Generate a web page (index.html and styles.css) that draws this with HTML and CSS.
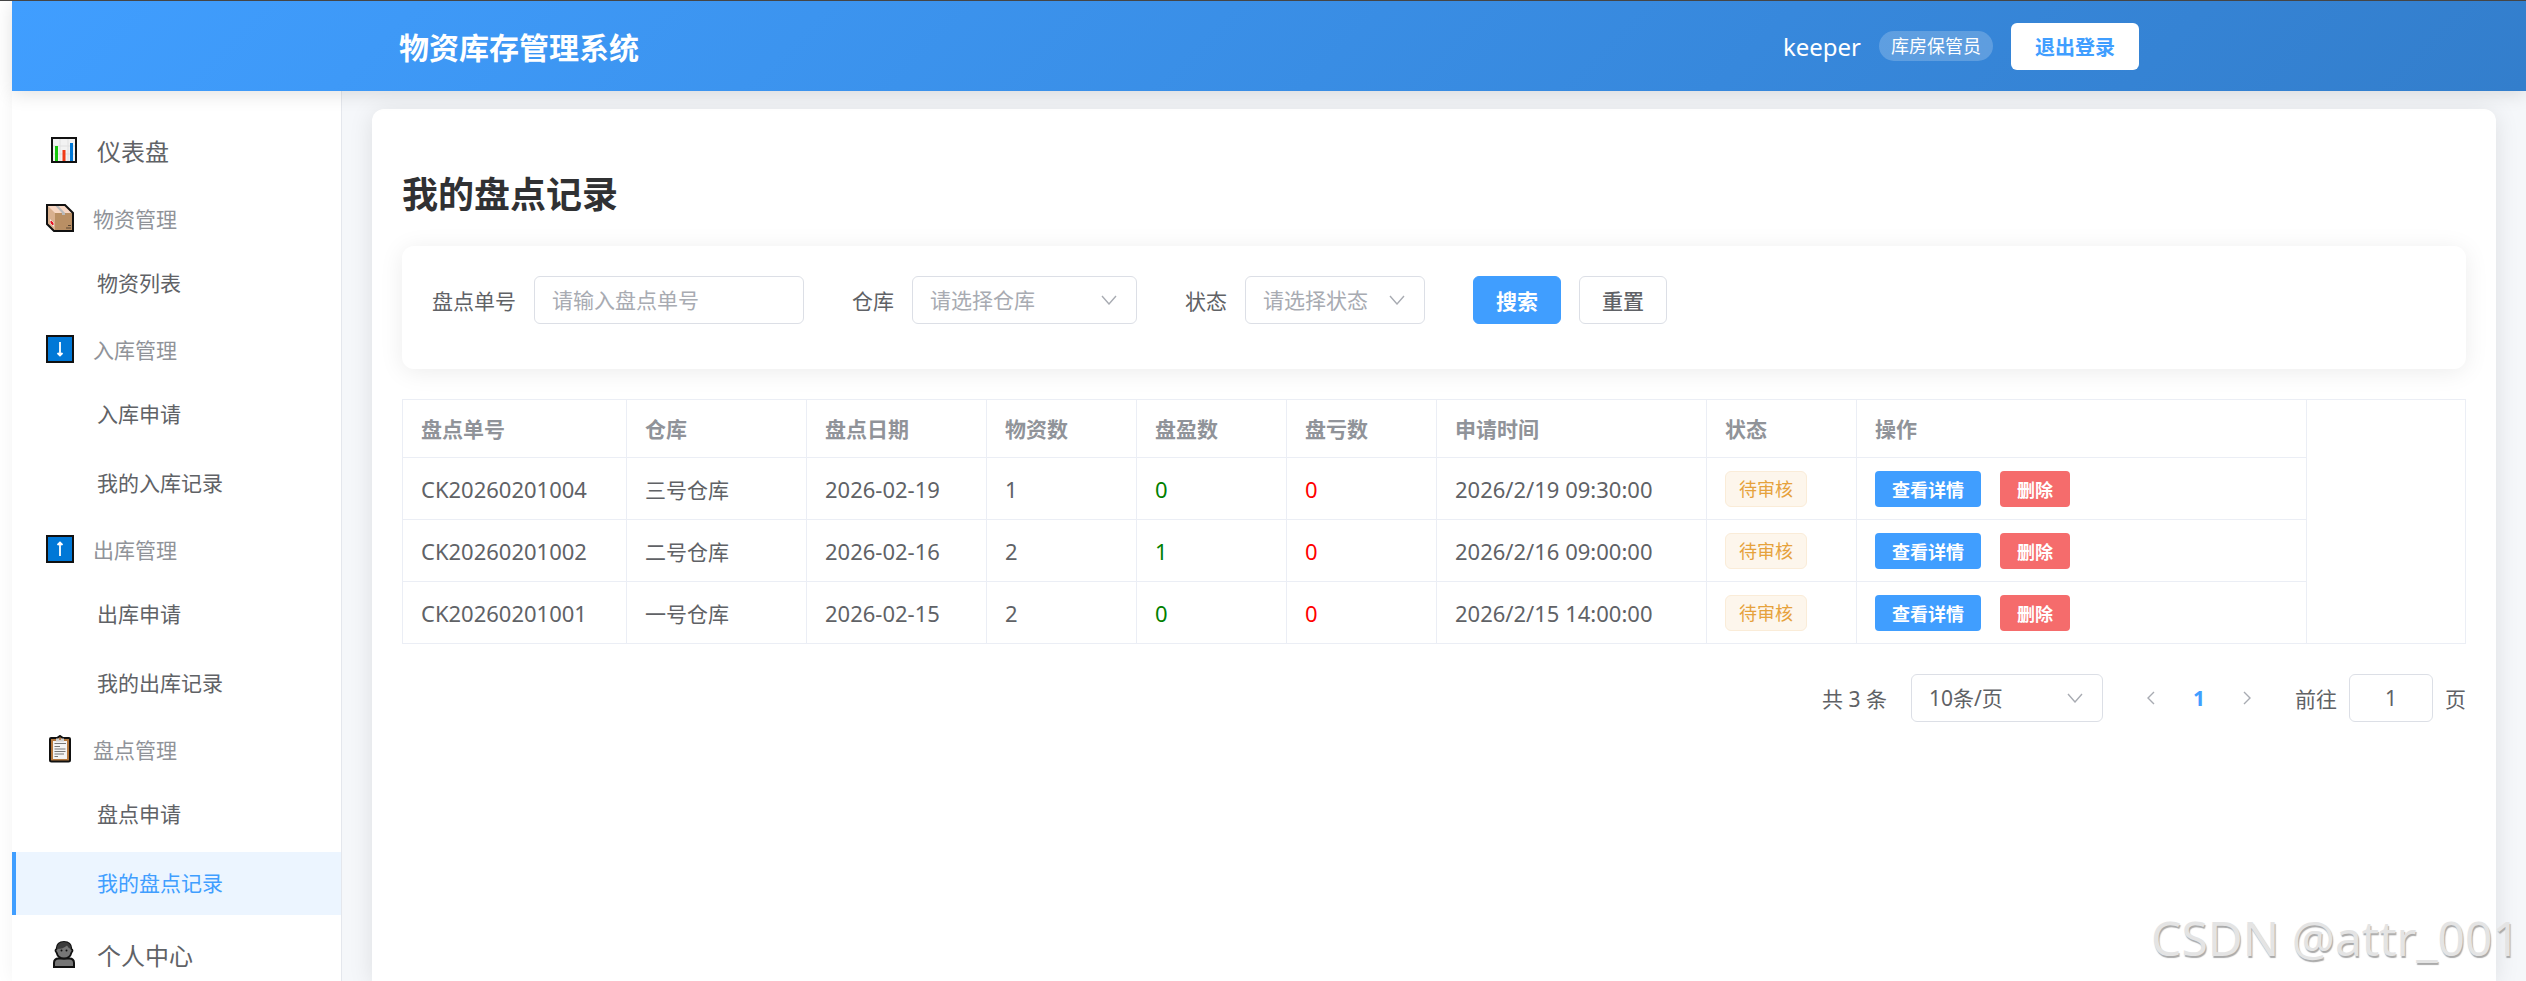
FILE: index.html
```html
<!DOCTYPE html>
<html lang="zh-CN">
<head>
  <meta charset="UTF-8">
  <meta name="viewport" content="width=device-width, initial-scale=1.0">
  <title>物资库存管理系统</title>
  <link rel="stylesheet" href="styles.css">
</head>
<body>
  <header class="header">
    <div class="header-content">
      <div class="logo">物资库存管理系统</div>
      <div class="user-info">
        <span class="username">keeper</span>
        <span class="role">库房保管员</span>
        <button type="button" class="logout-btn">退出登录</button>
      </div>
    </div>
  </header>

  <div class="layout">
    <nav class="sidebar">
      <a href="#" class="menu-item">
        <svg class="icon" viewBox="0 0 28 28">
          <rect x="2" y="2" width="24" height="24" fill="#f2f2f2" stroke="#111" stroke-width="2"/>
          <path d="M3 10H25M3 18H25M10 3V25M18 3V25" stroke="#e0e0e0"/>
          <path d="M6.500 10V25" stroke="#16c60c" stroke-width="3"/>
          <path d="M14 14V25" stroke="#f03a17" stroke-width="3"/>
          <path d="M21.500 7V25" stroke="#0078d7" stroke-width="3"/>
        </svg>
        <span>仪表盘</span>
      </a>

      <div class="menu-title">
        <svg class="icon" viewBox="0 0 28 28">
          <path d="M1 1H19L27 9V27H8L1 20Z" fill="#d9b08f"/>
          <path d="M1 1H19L27 9H9Z" fill="#f7d7c4"/>
          <path d="M9 9H27V27H9Z" fill="#b98f64"/>
          <path d="M9 1.500H12L19 9V11H16V9Z" fill="#b9b9b9"/>
          <path d="M4 15L8 19V23L4 19Z" fill="#f4e4e4"/>
          <path d="M5 17L7 19V21L5 19Z" fill="#e81224" stroke="#e81224"/>
          <path d="M22 21.500H25M20 24H25" stroke="#5a4632" stroke-width="1"/>
          <path d="M1 1H19L27 9V27H8L1 20Z" fill="none" stroke="#111" stroke-width="2"/>
        </svg>
        <span>物资管理</span>
      </div>
      <div class="submenu">
        <a href="#" class="submenu-item">物资列表</a>
      </div>

      <div class="menu-title">
        <svg class="icon" viewBox="0 0 28 28">
          <rect x="1" y="1" width="26" height="26" fill="#0078d7" stroke="#111" stroke-width="2"/>
          <path d="M14 7V20M11.500 18L14 20.500L16.500 18" fill="none" stroke="#fff" stroke-width="1.800"/>
        </svg>
        <span>入库管理</span>
      </div>
      <div class="submenu">
        <a href="#" class="submenu-item">入库申请</a>
        <a href="#" class="submenu-item">我的入库记录</a>
      </div>

      <div class="menu-title">
        <svg class="icon" viewBox="0 0 28 28">
          <rect x="1" y="1" width="26" height="26" fill="#0078d7" stroke="#111" stroke-width="2"/>
          <path d="M14 21V8M11.500 10L14 7.500L16.500 10" fill="none" stroke="#fff" stroke-width="1.800"/>
        </svg>
        <span>出库管理</span>
      </div>
      <div class="submenu">
        <a href="#" class="submenu-item">出库申请</a>
        <a href="#" class="submenu-item">我的出库记录</a>
      </div>

      <div class="menu-title">
        <svg class="icon" viewBox="0 0 28 28">
          <path d="M5 3H11L14 1L17 3H23Q24 3 24 4V25Q24 26.500 22.500 26.500H5.500Q4 26.500 4 25V4Q4 3 5 3Z" fill="#b5793f" stroke="#111" stroke-width="2"/>
          <path d="M7 6H21V24H7Z" fill="#f4f4f4"/>
          <path d="M10 3.500H18V6.500H10Z" fill="#d0d0d0"/>
          <circle cx="14" cy="4" r="1" fill="#a96b32"/>
          <path d="M8.500 8.500H20M8.500 11.500H14M8.500 14H19.500M8.500 16.500H19.500M8.500 19H18M8.500 21.500H12" stroke="#777" stroke-width="1.200"/>
        </svg>
        <span>盘点管理</span>
      </div>
      <div class="submenu">
        <a href="#" class="submenu-item">盘点申请</a>
        <a href="#" class="submenu-item active">我的盘点记录</a>
      </div>

      <a href="#" class="menu-item">
        <svg class="icon" viewBox="0 0 28 28">
          <path d="M4 27V23Q4 18.500 8.500 18.500H19.500Q24 18.500 24 23V27Z" fill="#767676" stroke="#111" stroke-width="2"/>
          <path d="M14 2Q21 2 21.500 9Q23.500 10 21.500 12.500Q20 18.500 14 18.500Q8 18.500 6.500 12.500Q4.500 10 6.500 9Q7 2 14 2Z" fill="#767676" stroke="#111" stroke-width="1.800"/>
          <path d="M7 9Q7 2 14 2Q21 2 21 9Q18 8 17 5.500Q13 9 7 9Z" fill="#3b3b3b"/>
          <circle cx="11.500" cy="10.500" r="1" fill="#111"/>
          <circle cx="16.500" cy="10.500" r="1" fill="#111"/>
        </svg>
        <span>个人中心</span>
      </a>
    </nav>

    <main class="main-content">
      <div class="page-card">
        <h1>我的盘点记录</h1>

        <form class="search-form">
          <div class="form-item">
            <label for="checkNo">盘点单号</label>
            <input type="text" id="checkNo" class="field field-no" placeholder="请输入盘点单号">
          </div>
          <div class="form-item">
            <label for="warehouse">仓库</label>
            <div class="select-wrap">
              <select id="warehouse" class="field field-warehouse placeholder">
                <option>请选择仓库</option>
              </select>
              <svg class="arrow" viewBox="0 0 16 10"><path d="M1 1L8 9L15 1"/></svg>
            </div>
          </div>
          <div class="form-item">
            <label for="status">状态</label>
            <div class="select-wrap">
              <select id="status" class="field field-status placeholder">
                <option>请选择状态</option>
              </select>
              <svg class="arrow" viewBox="0 0 16 10"><path d="M1 1L8 9L15 1"/></svg>
            </div>
          </div>
          <div class="form-buttons">
            <button type="button" class="btn btn-primary">搜索</button>
            <button type="button" class="btn">重置</button>
          </div>
        </form>

        <table class="record-table">
          <colgroup>
            <col class="col-no">
            <col class="col-date">
            <col class="col-date">
            <col class="col-num">
            <col class="col-num">
            <col class="col-num">
            <col class="col-time">
            <col class="col-num">
            <col class="col-action">
            <col>
          </colgroup>
          <thead>
            <tr>
              <th>盘点单号</th>
              <th>仓库</th>
              <th>盘点日期</th>
              <th>物资数</th>
              <th>盘盈数</th>
              <th>盘亏数</th>
              <th>申请时间</th>
              <th>状态</th>
              <th>操作</th>
              <td class="gutter"></td>
            </tr>
          </thead>
          <tbody>
            <tr>
              <td>CK20260201004</td>
              <td class="warehouse">三号仓库</td>
              <td>2026-02-19</td>
              <td>1</td>
              <td class="profit">0</td>
              <td class="loss">0</td>
              <td>2026/2/19 09:30:00</td>
              <td><span class="tag">待审核</span></td>
              <td>
                <div class="actions">
                  <button type="button" class="btn-small">查看详情</button>
                  <button type="button" class="btn-small btn-danger">删除</button>
                </div>
              </td>
              <td class="gutter"></td>
            </tr>
            <tr>
              <td>CK20260201002</td>
              <td class="warehouse">二号仓库</td>
              <td>2026-02-16</td>
              <td>2</td>
              <td class="profit">1</td>
              <td class="loss">0</td>
              <td>2026/2/16 09:00:00</td>
              <td><span class="tag">待审核</span></td>
              <td>
                <div class="actions">
                  <button type="button" class="btn-small">查看详情</button>
                  <button type="button" class="btn-small btn-danger">删除</button>
                </div>
              </td>
              <td class="gutter"></td>
            </tr>
            <tr>
              <td>CK20260201001</td>
              <td class="warehouse">一号仓库</td>
              <td>2026-02-15</td>
              <td>2</td>
              <td class="profit">0</td>
              <td class="loss">0</td>
              <td>2026/2/15 14:00:00</td>
              <td><span class="tag">待审核</span></td>
              <td>
                <div class="actions">
                  <button type="button" class="btn-small">查看详情</button>
                  <button type="button" class="btn-small btn-danger">删除</button>
                </div>
              </td>
              <td class="gutter"></td>
            </tr>
          </tbody>
        </table>

        <div class="pagination">
          <span class="total">共 3 条</span>
          <div class="select-wrap">
            <select class="field field-size" aria-label="每页条数">
              <option>10条/页</option>
            </select>
            <svg class="arrow" viewBox="0 0 16 10"><path d="M1 1L8 9L15 1"/></svg>
          </div>
          <div class="pager">
            <button type="button" class="page-btn" aria-label="上一页" disabled>
              <svg viewBox="0 0 8 14"><path d="M7 1L1 7L7 13"/></svg>
            </button>
            <button type="button" class="page-btn current">1</button>
            <button type="button" class="page-btn" aria-label="下一页" disabled>
              <svg viewBox="0 0 8 14"><path d="M1 1L7 7L1 13"/></svg>
            </button>
          </div>
          <div class="jump">
            <label for="pageNo">前往</label>
            <input type="text" id="pageNo" class="field field-page" value="1">
            <span>页</span>
          </div>
        </div>
      </div>
    </main>
  </div>

  <div class="watermark">CSDN @attr_001</div>
</body>
</html>
```
FILE: styles.css
```css
* {
  box-sizing: border-box;
}

body {
  margin: 0;
  padding-left: 12px;
  height: 100vh;
  display: flex;
  flex-direction: column;
  overflow: hidden;
  position: relative;
  border-top: 1px solid #454545;
  background: #fff;
  font-family: "Noto Sans", "Noto Sans CJK SC", sans-serif;
  font-size: 21px;
  color: #606266;
}

button,
input,
select {
  font-family: inherit;
  font-size: inherit;
  color: inherit;
}

button {
  cursor: pointer;
}

a {
  color: inherit;
  text-decoration: none;
}

/* Header */
.header {
  flex: none;
  height: 90px;
  position: relative;
  z-index: 1;
  background: linear-gradient(135deg, #409eff, #337ecc);
  box-shadow: 0 3px 18px rgba(0, 0, 0, 0.12);
  color: #fff;
}

.header-content {
  max-width: 1800px;
  height: 100%;
  margin: 0 auto;
  padding: 0 30px;
  display: flex;
  align-items: center;
  justify-content: space-between;
}

.logo {
  font-size: 30px;
  font-weight: bold;
}

.user-info {
  display: flex;
  align-items: center;
  gap: 18px;
}

.username {
  font-size: 24px;
}

.role {
  height: 30px;
  padding: 0 12px;
  line-height: 30px;
  border-radius: 15px;
  background: rgba(255, 255, 255, 0.2);
  font-size: 18px;
}

.logout-btn {
  height: 47px;
  padding: 0 24px;
  border: none;
  border-radius: 6px;
  background: #fff;
  color: #409eff;
  font-size: 20px;
  font-weight: 600;
}

/* Sidebar */
.layout {
  flex: 1;
  min-height: 0;
  display: flex;
}

.sidebar {
  flex: none;
  width: 330px;
  padding-top: 20px;
  overflow: hidden;
  border-right: 1px solid #e4e7ed;
  background: #fff;
  box-shadow: 0 0 18px rgba(0, 0, 0, 0.05);
}

.icon {
  flex: none;
  width: 28px;
  height: 28px;
}

.menu-item,
.menu-title {
  display: flex;
  align-items: center;
  gap: 19px;
}

.menu-item {
  height: 72px;
  margin-top: 3px;
  padding-left: 38px;
  font-size: 24px;
}

.menu-title {
  height: 66px;
  padding: 0 0 3px 34px;
  color: #909399;
}

.submenu {
  display: flex;
  flex-direction: column;
  gap: 6px;
  margin-bottom: 2px;
}

.submenu-item {
  height: 63px;
  padding-left: 81px;
  border-left: 4px solid transparent;
  line-height: 63px;
}

.submenu-item.active {
  border-left-color: #409eff;
  background: #ecf5ff;
  color: #409eff;
}

/* Main card */
.main-content {
  flex: 1;
  min-width: 0;
  display: flex;
  padding: 18px 30px 0;
  background: #f5f7fa;
}

.page-card {
  flex: 1;
  min-width: 0;
  padding: 30px 30px 0;
  border-radius: 12px 12px 0 0;
  background: #fff;
  box-shadow: 0 3px 24px rgba(0, 0, 0, 0.1);
}

h1 {
  margin: 32px 0 27px;
  font-size: 36px;
  line-height: 48px;
  color: #303133;
}

.search-form {
  display: flex;
  align-items: flex-start;
  gap: 48px;
  height: 123px;
  margin-bottom: 30px;
  padding: 30px;
  border-radius: 12px;
  box-shadow: 0 3px 24px rgba(0, 0, 0, 0.08);
}

.form-item,
.form-buttons {
  display: flex;
  align-items: center;
  gap: 18px;
}

.field {
  height: 48px;
  padding: 0 17px;
  border: 1px solid #dcdfe6;
  border-radius: 6px;
  outline: none;
  background: #fff;
  appearance: none;
}

.field::placeholder,
.field.placeholder {
  color: #a8abb2;
  opacity: 1;
}

.field-no {
  width: 270px;
}

.field-warehouse {
  width: 225px;
}

.field-status {
  width: 180px;
}

.field-size {
  width: 192px;
}

.field-page {
  width: 84px;
  text-align: center;
}

.select-wrap {
  position: relative;
}

.select-wrap .arrow {
  position: absolute;
  top: 19px;
  right: 20px;
  width: 16px;
  height: 10px;
  pointer-events: none;
}

svg.arrow path,
.page-btn path {
  fill: none;
  stroke: #a8abb2;
  stroke-width: 1.4;
}

.btn {
  height: 48px;
  padding: 0 22px;
  border: 1px solid #dcdfe6;
  border-radius: 6px;
  background: #fff;
  font-weight: 500;
}

.btn-primary {
  border-color: #409eff;
  background: #409eff;
  color: #fff;
  font-weight: 600;
}

/* Table */
.record-table {
  width: 100%;
  table-layout: fixed;
  border-collapse: collapse;
  border: 1px solid #ebeef5;
}

.col-no {
  width: 224px;
}

.col-date {
  width: 180px;
}

.col-num {
  width: 150px;
}

.col-time {
  width: 270px;
}

.col-action {
  width: 450px;
}

.record-table th,
.record-table td {
  height: 62px;
  padding: 0 0 0 18px;
  border: 1px solid #ebeef5;
  text-align: left;
  white-space: nowrap;
}

.record-table th {
  height: 58px;
  padding-bottom: 2px;
  color: #909399;
  font-weight: bold;
}

.record-table td {
  font-size: 22px;
}

.record-table .warehouse {
  font-size: 21px;
}

/* empty space right of the last column, no row lines */
.record-table .gutter {
  height: auto;
  border-top: none;
  border-bottom: none;
}

.profit {
  color: green;
}

.loss {
  color: red;
}

.tag {
  display: block;
  width: fit-content;
  height: 36px;
  padding: 0 13px;
  border: 1px solid #faecd8;
  border-radius: 6px;
  background: #fdf6ec;
  color: #e6a23c;
  font-size: 18px;
  line-height: 34px;
}

.actions {
  display: flex;
  gap: 19px;
}

.btn-small {
  height: 36px;
  padding: 0 17px;
  border: none;
  border-radius: 4px;
  background: #409eff;
  color: #fff;
  font-size: 18px;
  font-weight: 600;
}

.btn-danger {
  background: #f56c6c;
}

/* Pagination */
.pagination {
  display: flex;
  align-items: center;
  justify-content: flex-end;
  gap: 24px;
  margin-top: 30px;
}

.pager {
  display: flex;
}

.page-btn {
  display: flex;
  align-items: center;
  justify-content: center;
  width: 48px;
  height: 48px;
  padding: 0;
  border: none;
  background: none;
}

.page-btn svg {
  width: 8px;
  height: 14px;
}

.page-btn.current {
  color: #409eff;
  font-weight: bold;
}

.jump {
  display: flex;
  align-items: center;
  gap: 12px;
}

.watermark {
  position: absolute;
  right: 6px;
  bottom: 11px;
  z-index: 2;
  color: #e4e4e4;
  font-size: 48px;
  line-height: 64px;
  text-shadow: 1px 2px 1px #aaa;
}
```
